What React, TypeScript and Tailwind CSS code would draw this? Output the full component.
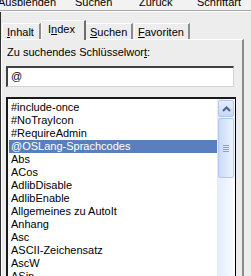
import React from "react";

const items = [
  "#include-once",
  "#NoTrayIcon",
  "#RequireAdmin",
  "@OSLang-Sprachcodes",
  "Abs",
  "ACos",
  "AdlibDisable",
  "AdlibEnable",
  "Allgemeines zu AutoIt",
  "Anhang",
  "Asc",
  "ASCII-Zeichensatz",
  "AscW",
  "ASin",
];

export default function App() {
  return (
    <div
      className="w-[251px] h-[276px] overflow-hidden bg-[#ededed] text-[11px] text-black flex flex-col"
      style={{ fontFamily: '"Liberation Sans", Arial, sans-serif' }}
    >
      {/* toolbar strip */}
      <div className="h-[11px] overflow-hidden bg-[#f2f2f2] border-b border-[#a8a8a8] shrink-0">
        <div className="flex -mt-[4px] leading-[13px] -ml-[2px] whitespace-nowrap">
          <span className="w-[77px] shrink-0">Ausblenden</span>
          <span className="w-[64px] shrink-0">Suchen</span>
          <span className="w-[58px] shrink-0">Zurück</span>
          <span className="shrink-0">Schriftart</span>
        </div>
      </div>
      <div className="h-[1px] bg-white shrink-0" />
      <div className="flex flex-1 min-h-0">
        <div className="w-[1px] bg-[#303030] shrink-0" />
        <div className="flex-1 flex flex-col min-w-0 pt-[8px]">
          {/* tabs */}
          <div className="flex items-end h-[19px] pl-[1px] relative z-10">
            <div className="w-[39px] h-[16px] border-t border-l border-white border-r-2 border-r-[#8c8c8c] rounded-tl-[2px] pl-[4px] leading-[17px]">
              <span className="underline">I</span>nhalt
            </div>
            <div className="w-[45px] h-[20px] -mb-[1px] bg-[#ededed] border-t border-l border-white border-r-2 border-r-[#6e6e6e] rounded-tl-[2px] pl-[6px] leading-[17px]">
              I<span className="underline">n</span>dex
            </div>
            <div className="w-[47px] h-[16px] border-t border-white border-r-2 border-r-[#8c8c8c] pl-[4px] leading-[17px]">
              <span className="underline">S</span>uchen
            </div>
            <div className="w-[56px] h-[16px] ml-[1px] border-t border-l border-white border-r-2 border-r-[#8c8c8c] pl-[3px] leading-[17px]">
              <span className="underline">F</span>avoriten
            </div>
          </div>
          {/* panel */}
          <div className="flex-1 w-[243px] border-t border-l border-white border-r-2 border-r-[#8a8a8a] flex flex-col pl-[4px] pr-[6px] pt-[6px] min-h-0">
            <div className="leading-[13px] whitespace-nowrap pl-[1px]">
              Zu suchendes Schlüsselwor<span className="underline">t</span>:
            </div>
            <div className="mt-[7px] h-[21px] w-[228px] bg-white border-t-2 border-l-2 border-t-[#404040] border-l-[#404040] border-r border-b border-r-[#d4d4d4] border-b-[#d4d4d4] pl-[3px] leading-[17px]">
              @
            </div>
            <div className="mt-[10px] flex-1 w-[230px] bg-white border-t-2 border-l-2 border-[#1a1a1a] border-r border-r-black flex min-h-0">
              <div className="flex-1 pt-[2px] pl-[1px] overflow-hidden">
                {items.map((t, i) => (
                  <div
                    key={t}
                    className={
                      "h-[13px] leading-[13px] pl-[2px] whitespace-nowrap " +
                      (i === 3 ? "bg-[#5b7fbd] text-white" : "")
                    }
                  >
                    {t}
                  </div>
                ))}
              </div>
              {/* scrollbar */}
              <div className="w-[18px] shrink-0 flex flex-col bg-gradient-to-r from-[#e3ecfc] to-[#fafcff] pt-[1px]">
                <div className="h-[17px] mx-[1px] rounded-[2px] border border-[#b4c8ef] bg-gradient-to-b from-[#e6eeff] to-[#c6d7f8] flex items-center justify-center">
                  <svg width="9" height="6" viewBox="0 0 9 6">
                    <path d="M1 5 L4.5 1.5 L8 5" stroke="#4d6185" strokeWidth="2" fill="none" />
                  </svg>
                </div>
                <div className="h-[60px] mt-[1px] mx-[1px] rounded-[2px] border border-[#b4c8ef] bg-gradient-to-r from-[#c9daf9] to-[#eef3fe] flex flex-col items-center justify-center gap-[1px]">
                  <div className="w-[6px] h-[1px] bg-[#8ca0c8]" />
                  <div className="w-[6px] h-[1px] bg-[#8ca0c8]" />
                  <div className="w-[6px] h-[1px] bg-[#8ca0c8]" />
                  <div className="w-[6px] h-[1px] bg-[#8ca0c8]" />
                </div>
              </div>
            </div>
          </div>
        </div>
      </div>
    </div>
  );
}
